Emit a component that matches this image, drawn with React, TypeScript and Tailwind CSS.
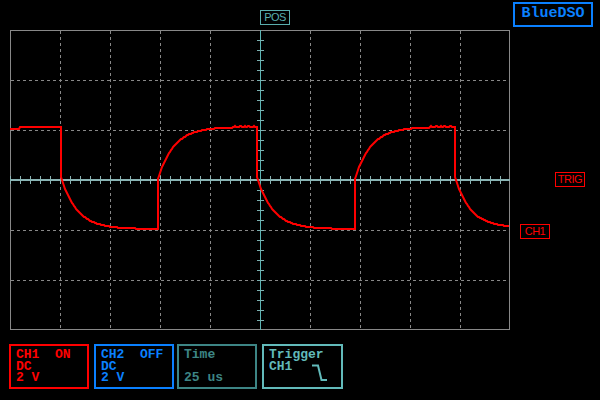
import React from 'react';

// scope screen: 10 x 6 divisions of 50px, frame at x=10..509, y=30..329 (page coords)
const TOP = 30;

type Edge = { x: number; kind: 'fall' | 'rise' };

const edges: Edge[] = [
  { x: 61, kind: 'fall' },
  { x: 158, kind: 'rise' },
  { x: 257, kind: 'fall' },
  { x: 355, kind: 'rise' },
  { x: 455, kind: 'fall' },
];

// small ripple on the top plateau, as the probe picks up noise
const jitter = [0, 0, -1, -1, 0, 0, 0, -1, 0, 0, -1, -1, 0, 0];

function buildWave() {
  const H = 127;
  const L = 229;
  const tau = 16;
  const jump = 50;
  const pts: [number, number][] = [];
  for (let x = 10; x <= 509; x++) {
    const prev = [...edges].reverse().find((e) => e.x <= x);
    let y: number;
    if (!prev) {
      y = x < 20 ? 129 : H;
    } else if (prev.kind === 'fall') {
      const low = x > 480 ? 228 : L;
      if (x === prev.x) pts.push([x, H]);
      y = low - (low - (H + jump)) * Math.exp(-(x - prev.x) / tau);
    } else {
      if (x === prev.x) pts.push([x, L]);
      y = H + (L - jump - H) * Math.exp(-(x - prev.x) / tau);
      if ((x > 234 && x < 255) || (x > 430 && x < 453)) {
        y += jitter[x % jitter.length];
      }
    }
    pts.push([x, Math.round(y)]);
  }
  return pts.map(([x, y], i) => `${i ? 'L' : 'M'}${x} ${y - TOP}`).join(' ');
}

const wavePath = buildWave();

function Screen() {
  const vLines = [60, 110, 160, 210, 310, 360, 410, 460];
  const hLines = [80, 130, 230, 280];
  const ticks = Array.from({ length: 50 }, (_, i) => 10 + i * 10);
  const vTicks = Array.from({ length: 29 }, (_, i) => 40 + i * 10);

  return (
    <svg width={600} height={314} className="block">
      <rect x={10.5} y={0.5} width={499} height={299} fill="none" stroke="#888" />
      {vLines.map((x) => (
        <line key={x} x1={x + 0.5} y1={1} x2={x + 0.5} y2={299} stroke="#888" strokeDasharray="3 3" />
      ))}
      {hLines.map((y) => (
        <line key={y} x1={11} y1={y - TOP + 0.5} x2={509} y2={y - TOP + 0.5} stroke="#888" strokeDasharray="3 3" />
      ))}
      {/* center axes */}
      <line x1={10} y1={150} x2={510} y2={150} stroke="#8ab4b4" strokeWidth={2} />
      {ticks.map((x) => (
        <line key={x} x1={x + 0.5} y1={146} x2={x + 0.5} y2={154} stroke="#8ab4b4" />
      ))}
      <line x1={260.5} y1={0} x2={260.5} y2={300} stroke="#5cb4b4" />
      {vTicks.map((y) => (
        <line key={y} x1={257} y1={y - TOP + 0.5} x2={264} y2={y - TOP + 0.5} stroke="#7ab0b0" />
      ))}
      <path d={wavePath} fill="none" stroke="#ff0000" strokeWidth={2} />
    </svg>
  );
}

function Panel({ border, text, className, children }: { border: string; text: string; className: string; children: React.ReactNode }) {
  return (
    <div className={`w-[80px] h-[45px] border-2 px-[5px] pt-[2px] text-[13px] leading-[11.5px] font-bold whitespace-pre ${border} ${text} ${className}`}>
      {children}
    </div>
  );
}

export default function App() {
  return (
    <div className="relative w-[600px] h-[400px] bg-black overflow-hidden font-['Liberation_Mono',monospace]">
      <div className="flex justify-end h-[30px] pt-[2px] pr-[7px]">
        <div className="w-[80px] h-[25px] border-2 border-[#0a80ff] flex items-center justify-center text-[15px] font-bold text-[#0a80ff]">
          BlueDSO
        </div>
      </div>

      <div className="absolute left-[260px] top-[10px] w-[30px] h-[15px] border border-[#5aaeae] text-[#5aaeae] text-[11px] leading-[13px] text-center tracking-[-0.5px] font-['Liberation_Sans',sans-serif]">
        POS
      </div>

      <Screen />

      <div className="absolute left-[555px] top-[172px] w-[30px] h-[15px] border border-[#ff0000] text-[#ff0000] text-[11px] leading-[13px] text-center tracking-[-0.5px] font-['Liberation_Sans',sans-serif]">
        TRIG
      </div>
      <div className="absolute left-[520px] top-[224px] w-[30px] h-[15px] border border-[#ff0000] text-[#ff0000] text-[11px] leading-[13px] text-center tracking-[-0.5px] font-['Liberation_Sans',sans-serif]">
        CH1
      </div>

      <div className="flex items-start">
        <Panel border="border-[#ff0000]" text="text-[#ff0000]" className="ml-[9px]">
          <div className="mt-[1px]">CH1  ON</div>
          <div>DC</div>
          <div>2 V</div>
        </Panel>
        <Panel border="border-[#0a80ff]" text="text-[#0a80ff]" className="ml-[5px]">
          <div className="mt-[1px]">CH2  OFF</div>
          <div>DC</div>
          <div>2 V</div>
        </Panel>
        <Panel border="border-[#3d8585]" text="text-[#3d8585]" className="ml-[3px]">
          <div className="mt-[1px]">Time</div>
          <div> </div>
          <div>25 us</div>
        </Panel>
        <Panel border="border-[#62baba]" text="text-[#62baba]" className="ml-[5px] w-[81px]">
          <div className="mt-[1px]">Trigger</div>
          <div className="flex items-start">
            <span>CH1</span>
            <svg width={17} height={18} className="ml-[20px] mt-[3px]">
              <path d="M0 1.5 H6 L9.5 16 H15" fill="none" stroke="#62baba" strokeWidth={2} />
            </svg>
          </div>
        </Panel>
      </div>
    </div>
  );
}
